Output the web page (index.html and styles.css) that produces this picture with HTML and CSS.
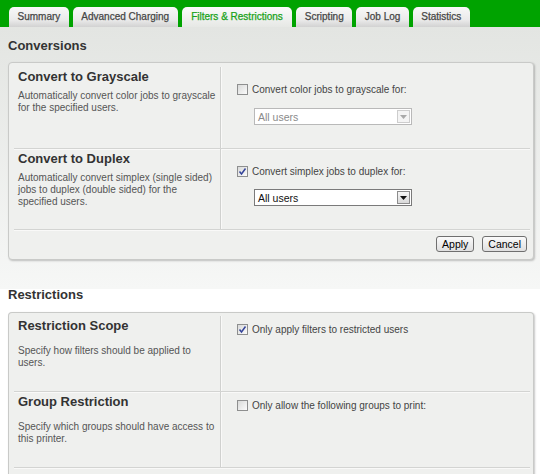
FILE: index.html
```html
<!DOCTYPE html>
<html>
<head>
<meta charset="utf-8">
<link rel="stylesheet" href="styles.css">
</head>
<body>
<div class="tabbar">
  <div class="tab">Summary</div>
  <div class="tab">Advanced Charging</div>
  <div class="tab active">Filters &amp; Restrictions</div>
  <div class="tab">Scripting</div>
  <div class="tab">Job Log</div>
  <div class="tab">Statistics</div>
</div>
<div class="page">
  <h2 class="section-title">Conversions</h2>
  <div class="panel">
    <div class="row">
      <div class="row-info">
        <div class="row-title">Convert to Grayscale</div>
        <div class="row-desc">Automatically convert color jobs to grayscale for the specified users.</div>
      </div>
      <div class="row-ctrl">
        <div class="check"><span class="box"></span><span>Convert color jobs to grayscale for:</span></div>
        <div class="select disabled"><span class="select-text">All users</span><span class="arrow"><svg width="7" height="4" viewBox="0 0 7 4"><path d="M0 0H7L3.5 4Z"/></svg></span></div>
      </div>
    </div>
    <div class="row">
      <div class="row-info">
        <div class="row-title">Convert to Duplex</div>
        <div class="row-desc">Automatically convert simplex (single sided) jobs to duplex (double sided) for the specified users.</div>
      </div>
      <div class="row-ctrl">
        <div class="check"><span class="box"><svg width="9" height="9" viewBox="0 0 9 9"><path d="M1.5 4.5L3.5 7L7.5 1.5" fill="none" stroke="#34449a" stroke-width="1.5"/></svg></span><span>Convert simplex jobs to duplex for:</span></div>
        <div class="select second"><span class="select-text">All users</span><span class="arrow"><svg width="7" height="4" viewBox="0 0 7 4"><path d="M0 0H7L3.5 4Z"/></svg></span></div>
      </div>
    </div>
    <div class="actions">
      <button class="btn">Apply</button>
      <button class="btn">Cancel</button>
    </div>
  </div>

  <h2 class="section-title spaced">Restrictions</h2>
  <div class="panel open">
    <div class="row plain">
      <div class="row-info">
        <div class="row-title">Restriction Scope</div>
        <div class="row-desc wide-gap">Specify how filters should be applied to users.</div>
      </div>
      <div class="row-ctrl top">
        <div class="check"><span class="box"><svg width="9" height="9" viewBox="0 0 9 9"><path d="M1.5 4.5L3.5 7L7.5 1.5" fill="none" stroke="#34449a" stroke-width="1.5"/></svg></span><span>Only apply filters to restricted users</span></div>
      </div>
    </div>
    <div class="row plain">
      <div class="row-info">
        <div class="row-title">Group Restriction</div>
        <div class="row-desc wide-gap">Specify which groups should have access to this printer.</div>
      </div>
      <div class="row-ctrl top">
        <div class="check"><span class="box"></span><span>Only allow the following groups to print:</span></div>
      </div>
    </div>
  </div>
</div>
</body>
</html>
```

FILE: styles.css
```css
html, body {
  margin: 0;
  padding: 0;
  background: #ffffff;
  font-family: "Liberation Sans", Arial, sans-serif;
}

.tabbar {
  height: 27px;
  box-sizing: border-box;
  background: #00a300;
  display: flex;
  align-items: flex-end;
  gap: 4px;
  padding-left: 9px;
}

.tab {
  height: 20px;
  line-height: 20px;
  padding: 0 8.5px;
  font-size: 10px;
  color: #464646;
  -webkit-text-stroke: 0.25px #464646;
  background: linear-gradient(#f8f8f8, #eaeaea 65%, #d2d2d2);
  border-radius: 5px 5px 0 0;
  white-space: nowrap;
}

.tab.active {
  padding: 0 9.5px;
  color: #1aa31a;
  -webkit-text-stroke: 0.25px #1aa31a;
  background: linear-gradient(#fbfbfb, #e6e8e5);
}

.page {
  padding: 11px 6px 0 8px;
  background: linear-gradient(#e3e5e2 0px, #f6f7f6 262px, #ffffff 262px);
}

.section-title {
  margin: 0 0 9px;
  font-size: 13px;
  line-height: 15px;
  font-weight: bold;
  color: #333333;
}

.section-title.spaced {
  margin: 27px 0 10px;
}

.panel {
  border: 1px solid #c9cac8;
  border-radius: 4px;
  background: #eff0ee;
  box-shadow: 1px 1px 2px rgba(0, 0, 0, 0.22);
  padding-top: 4px;
}

.panel.open {
  padding-top: 3px;
  padding-bottom: 20px;
  border-bottom: none;
  border-radius: 4px 4px 0 0;
}

.row {
  display: flex;
  margin: 0 3px 0 5px;
  border-bottom: 1px solid #d3d4d2;
  box-shadow: 0 1px 0 #f9f9f8;
}

.row.plain {
  min-height: 75px;
}

.row-info {
  width: 207px;
  box-sizing: border-box;
  padding: 3px 0 0 4px;
  border-right: 1px solid #d0d1cf;
  box-shadow: 1px 0 0 #f9f9f8;
}

.row-title {
  font-size: 13px;
  line-height: 14px;
  font-weight: bold;
  color: #333333;
}

.row-desc {
  margin-top: 6px;
  width: 200px;
  font-size: 10px;
  line-height: 12px;
  color: #555555;
}

.row-desc.wide-gap {
  margin-top: 12px;
}

.row-ctrl {
  padding: 15px 0 23px 16px;
}

.row-ctrl.top {
  padding-top: 6px;
}

.check {
  display: flex;
  align-items: center;
  gap: 4px;
  height: 14px;
  font-size: 10px;
  color: #444444;
  white-space: nowrap;
}

.box {
  width: 11px;
  height: 11px;
  box-sizing: border-box;
  border: 1px solid #8e8f8f;
  background: linear-gradient(135deg, #d9dad9, #fbfbfb);
  display: flex;
  align-items: center;
  justify-content: center;
}

.select {
  margin: 12px 0 0 17px;
  width: 158px;
  height: 17px;
  box-sizing: border-box;
  border: 1px solid #7a7a7a;
  background: #ffffff;
  display: flex;
  align-items: center;
  justify-content: space-between;
  padding: 0 1px 0 3px;
}

.select.second {
  margin-top: 11px;
}

.select-text {
  font-size: 10.5px;
  color: #111111;
}

.arrow {
  width: 13px;
  height: 13px;
  box-sizing: border-box;
  border: 1px solid #8c8c8c;
  background: linear-gradient(#f6f6f6, #d9d9d9);
  display: flex;
  align-items: center;
  justify-content: center;
  fill: #111111;
}

.select.disabled {
  border-color: #b9b9b9;
}

.select.disabled .select-text {
  color: #8a8a8a;
}

.select.disabled .arrow {
  border-color: #cdcdcd;
  background: #f4f4f4;
  fill: #a9a9a9;
}

.actions {
  display: flex;
  justify-content: flex-end;
  gap: 8px;
  padding: 6px 6px 7px 0;
}

.btn {
  height: 16px;
  padding: 0 5px;
  margin: 0;
  font-family: "Liberation Sans", Arial, sans-serif;
  font-size: 10.5px;
  line-height: 14px;
  color: #000000;
  border: 1px solid #6f6f6f;
  border-radius: 3px;
  background: linear-gradient(#fbfbfb, #dfdfdf);
}
```
